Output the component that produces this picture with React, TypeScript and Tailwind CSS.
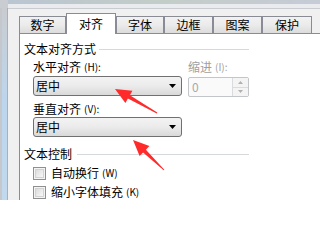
import React from "react";

function Combo() {
  return (
    <div className="flex h-[20px] w-[149px] items-center justify-between rounded-[3px] border border-[#707070] bg-gradient-to-b from-[#f3f3f3] via-[#ebebeb] to-[#d9d9d9] pl-[2px] pr-[5px]">
      <span className="text-[12px] leading-[16px] text-black">居中</span>
      <svg width="7" height="4" viewBox="0 0 7 4">
        <path d="M0 0h7L3.5 4z" fill="#000" />
      </svg>
    </div>
  );
}

function Tab({ label, w, active }: { label: string; w: string; active?: boolean }) {
  if (active) {
    return (
      <div
        className={`relative z-10 -mb-px flex h-[21px] items-center justify-center border border-b-0 border-[#898c95] bg-white text-[12px] leading-[16px] text-black ${w}`}
      >
        {label}
      </div>
    );
  }
  return (
    <div
      className={`flex h-[17px] items-center justify-center border border-b-0 border-[#898c95] bg-gradient-to-b from-[#f2f2f2] via-[#ebebeb] to-[#dcdcdc] text-[12px] leading-[16px] text-black ${w}`}
    >
      {label}
    </div>
  );
}

function Label({ text, hint, w, gray }: { text: string; hint: string; w?: string; gray?: boolean }) {
  return (
    <div
      className={`flex h-[16px] items-center overflow-hidden text-[12px] leading-[16px] ${gray ? "text-[#a0a0a0]" : "text-black"} ${w ?? ""}`}
    >
      <span className="leading-[16px]">{text}</span>
      <span className="ml-[3px] text-[10px] leading-[16px]">{hint}</span>
    </div>
  );
}

function Check({ label, hint }: { label: string; hint: string }) {
  return (
    <div className="flex h-[16px] items-center overflow-hidden">
      <div className="flex h-[13px] w-[13px] items-center justify-center border border-[#8f8f8f] bg-[#f4f4f4]">
        <div className="h-[9px] w-[9px] border border-[#d2d2d2] bg-gradient-to-br from-[#dcdcdc] to-[#f8f8f8]" />
      </div>
      <span className="ml-[5px] text-[12px] leading-[16px] text-black">{label}</span>
      <span className="ml-[3px] text-[10px] leading-[16px] text-black">{hint}</span>
    </div>
  );
}

export default function App() {
  return (
    <div className="relative flex h-[200px] w-[320px] flex-col overflow-hidden bg-[#f0f0f0] [font-family:'Noto_Sans_CJK_SC',sans-serif]">
      {/* top background strip */}
      <div className="flex h-[8px] w-full shrink-0">
        <div className="h-full w-[8px] bg-[#c9ccd0]" />
        <div className="flex flex-1 flex-col">
          <div className="h-[4px] bg-gradient-to-r from-[#b9c5d1] via-[#c3cdc8] to-[#c6cbd6]" />
          <div className="h-[4px] bg-[#e9ebee]" />
        </div>
      </div>
      <div className="flex min-h-0 flex-1">
        {/* left background strip */}
        <div className="flex w-[8px]">
          <div className="w-[2px] bg-[#c4c8cc]" />
          <div className="w-[5px] bg-gradient-to-b from-[#c9ccd0] via-[#bcd6ee] to-[#c2d9ec]" />
          <div className="w-[1px] bg-[#aab0b6]" />
        </div>
        {/* dialog body */}
        <div className="flex min-h-0 flex-1 flex-col border-t border-[#c8cbcf] pl-[11px] pt-[4px]">
          <div className="flex h-[20px] shrink-0 items-end">
            <Tab label="数字" w="w-[47px]" />
            <Tab label="对齐" w="w-[50px]" active />
            <Tab label="字体" w="w-[48px]" />
            <Tab label="边框" w="w-[49px]" />
            <Tab label="图案" w="w-[49px]" />
            <Tab label="保护" w="w-[50px]" />
          </div>
          <div className="flex min-h-0 flex-1 flex-col border-l border-t border-[#898c95] bg-white pl-[4px] pt-[7px]">
            {/* group heading */}
            <div className="flex h-[16px] w-[225px] shrink-0 items-center">
              <span className="text-[12px] leading-[16px] text-black">文本对齐方式</span>
              <div className="ml-[3px] h-px flex-1 bg-[#d5d9dc]" />
            </div>
            <div className="shrink-0 pl-[9px]">
              <div className="mt-[2px] flex">
                <Label text="水平对齐" hint="(H):" w="w-[155px]" />
                <Label text="缩进" hint="(I):" gray />
              </div>
              <div className="mt-[1px] flex items-start">
                <Combo />
                <div className="ml-[6px] mt-[1px] flex h-[20px] w-[61px] rounded-[2px] border border-[#c3c6c9] bg-[#fafafa]">
                  <span className="flex-1 pl-[3px] text-[12px] leading-[18px] text-[#a8a8a8]">0</span>
                  <div className="flex w-[16px] flex-col border-l border-[#d9dcde]">
                    <div className="flex flex-1 items-center justify-center border-b border-[#d9dcde] bg-[#f4f4f4]">
                      <svg width="5" height="3" viewBox="0 0 5 3">
                        <path d="M0 3h5L2.5 0z" fill="#b0b0b0" />
                      </svg>
                    </div>
                    <div className="flex flex-1 items-center justify-center bg-[#f4f4f4]">
                      <svg width="5" height="3" viewBox="0 0 5 3">
                        <path d="M0 0h5L2.5 3z" fill="#b0b0b0" />
                      </svg>
                    </div>
                  </div>
                </div>
              </div>
              <div className="mt-[4px]">
                <Label text="垂直对齐" hint="(V):" />
              </div>
              <Combo />
            </div>
            <div className="mt-[9px] flex h-[16px] w-[225px] shrink-0 items-center">
              <span className="text-[12px] leading-[16px] text-black">文本控制</span>
              <div className="ml-[5px] h-px flex-1 bg-[#d5d9dc]" />
            </div>
            <div className="shrink-0 pl-[9px]">
              <div className="mt-[3px]">
                <Check label="自动换行" hint="(W)" />
              </div>
              <div className="mt-[3px]">
                <Check label="缩小字体填充" hint="(K)" />
              </div>
            </div>
          </div>
        </div>
      </div>
      {/* red annotation arrows */}
      <svg
        className="pointer-events-none absolute left-0 top-0"
        width="320"
        height="200"
        viewBox="0 0 320 200"
      >
        <polygon
          points="115,89 132.4,90.8 129.9,95.2 157.25,112.6 156.75,113.4 127.9,98.6 125.4,103"
          fill="#ff2b2b"
        />
        <polygon
          points="133,140 149.4,146.1 145.9,149.7 164.35,169.64 163.65,170.36 143.1,152.5 139.6,156.1"
          fill="#ff2b2b"
        />
      </svg>
    </div>
  );
}
